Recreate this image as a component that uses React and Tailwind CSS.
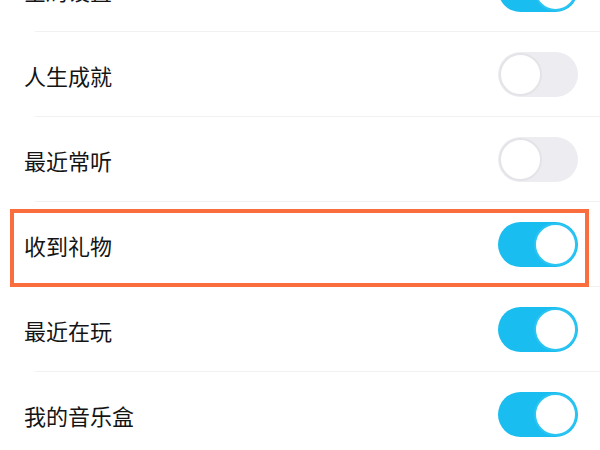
import React, { useState } from 'react';

const initialRows = [
  { id: 'global', label: '全局设置', on: true },
  { id: 'achieve', label: '人生成就', on: false },
  { id: 'recent-listen', label: '最近常听', on: false },
  { id: 'gift', label: '收到礼物', on: true, highlight: true },
  { id: 'recent-play', label: '最近在玩', on: true },
  { id: 'musicbox', label: '我的音乐盒', on: true },
];

function Toggle({ on, onClick }) {
  return (
    <button
      onClick={onClick}
      className={`relative w-[80px] h-[45px] rounded-full shrink-0 ${on ? 'bg-[#19bdf0]' : 'bg-[#ececf1]'}`}
    >
      <span
        className={`absolute top-[1px] w-[43px] h-[43px] rounded-full bg-white ${
          on ? 'right-[1px] border-2 border-[#2cc4f2]' : 'left-[1px] border-2 border-[#e4e4e8]'
        }`}
      ></span>
    </button>
  );
}

export default function App() {
  const [rows, setRows] = useState(initialRows);

  const flip = id => setRows(rows.map(r => (r.id === id ? { ...r, on: !r.on } : r)));

  return (
    <div
      className="w-[600px] h-[450px] overflow-hidden bg-white"
      style={{ fontFamily: '"Noto Sans CJK SC", "Noto Sans", sans-serif' }}
    >
      <div className="-mt-[53px]">
        {rows.map(row => (
          <div key={row.id} className="relative h-[85px] flex items-center pl-[24px] pr-[22px]">
            <span className="flex-1 text-[22px] text-[#141414] leading-none">{row.label}</span>
            <Toggle on={row.on} onClick={() => flip(row.id)} />
            <div className="absolute bottom-0 left-[35px] right-0 h-[1px] bg-[#f1f1f1]"></div>
            {row.highlight && (
              <div className="absolute top-[7px] bottom-[0px] left-[10px] right-[11px] border-4 border-[#f96d3f] pointer-events-none"></div>
            )}
          </div>
        ))}
      </div>
    </div>
  );
}
